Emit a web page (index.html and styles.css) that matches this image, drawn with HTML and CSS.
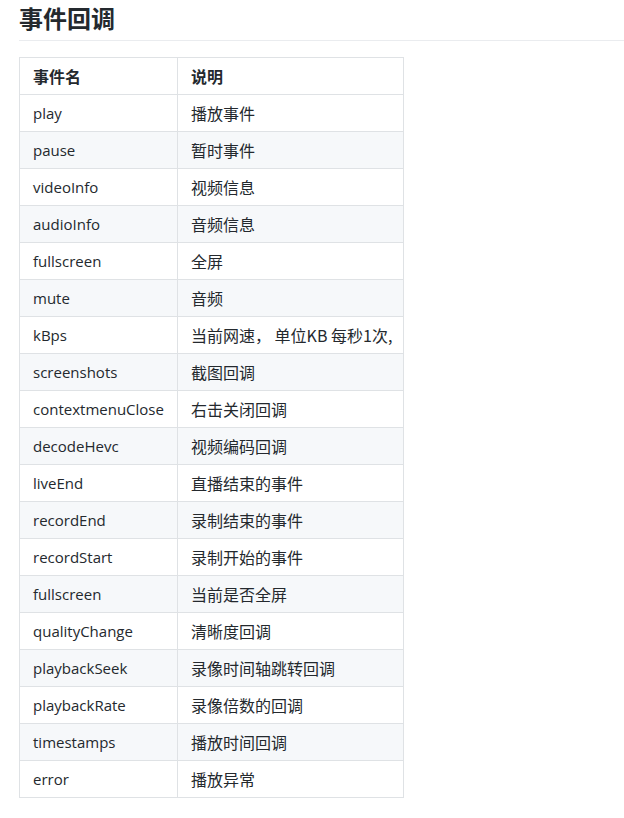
FILE: index.html
```html
<!DOCTYPE html>
<html lang="zh">
<head>
<meta charset="utf-8">
<link rel="stylesheet" href="styles.css">
</head>
<body>
<div class="doc">
  <h2 class="title">事件回调</h2>
  <table class="events">
    <thead>
      <tr><th>事件名</th><th>说明</th></tr>
    </thead>
    <tbody>
      <tr><td>play</td><td>播放事件</td></tr>
      <tr><td>pause</td><td>暂时事件</td></tr>
      <tr><td>videoInfo</td><td>视频信息</td></tr>
      <tr><td>audioInfo</td><td>音频信息</td></tr>
      <tr><td>fullscreen</td><td>全屏</td></tr>
      <tr><td>mute</td><td>音频</td></tr>
      <tr><td>kBps</td><td>当前网速， 单位KB 每秒1次,</td></tr>
      <tr><td>screenshots</td><td>截图回调</td></tr>
      <tr><td>contextmenuClose</td><td>右击关闭回调</td></tr>
      <tr><td>decodeHevc</td><td>视频编码回调</td></tr>
      <tr><td>liveEnd</td><td>直播结束的事件</td></tr>
      <tr><td>recordEnd</td><td>录制结束的事件</td></tr>
      <tr><td>recordStart</td><td>录制开始的事件</td></tr>
      <tr><td>fullscreen</td><td>当前是否全屏</td></tr>
      <tr><td>qualityChange</td><td>清晰度回调</td></tr>
      <tr><td>playbackSeek</td><td>录像时间轴跳转回调</td></tr>
      <tr><td>playbackRate</td><td>录像倍数的回调</td></tr>
      <tr><td>timestamps</td><td>播放时间回调</td></tr>
      <tr><td>error</td><td>播放异常</td></tr>
    </tbody>
  </table>
</div>
</body>
</html>
```

FILE: styles.css
```css
html, body {
  margin: 0;
  padding: 0;
  background: #ffffff;
}
body {
  font-family: "Open Sans", "Noto Sans CJK SC", sans-serif;
  color: #24292e;
  font-size: 15px;
}
.doc {
  padding: 3px 0 0 19px;
}
.title {
  margin: 0 0 16px 0;
  font-size: 24px;
  line-height: 30px;
  font-weight: 700;
  padding-bottom: 7px;
  border-bottom: 1px solid #eaecef;
  font-family: "Noto Sans CJK SC", sans-serif;
}
.events {
  border-collapse: collapse;
  border-spacing: 0;
  table-layout: fixed;
  width: 385px;
}
.events th,
.events td {
  border: 1px solid #dfe2e5;
  padding: 6px 13px;
  line-height: 24px;
  text-align: left;
  font-size: 15px;
  white-space: nowrap;
}
.events th {
  font-weight: 700;
  font-family: "Noto Sans CJK SC", sans-serif;
  font-size: 16px;
}
.events td:last-child {
  font-family: "Noto Sans CJK SC", sans-serif;
  font-size: 16px;
}
.events th:first-child {
  width: 131px;
}
.events tbody tr:nth-child(2n) {
  background: #f6f8fa;
}
```
